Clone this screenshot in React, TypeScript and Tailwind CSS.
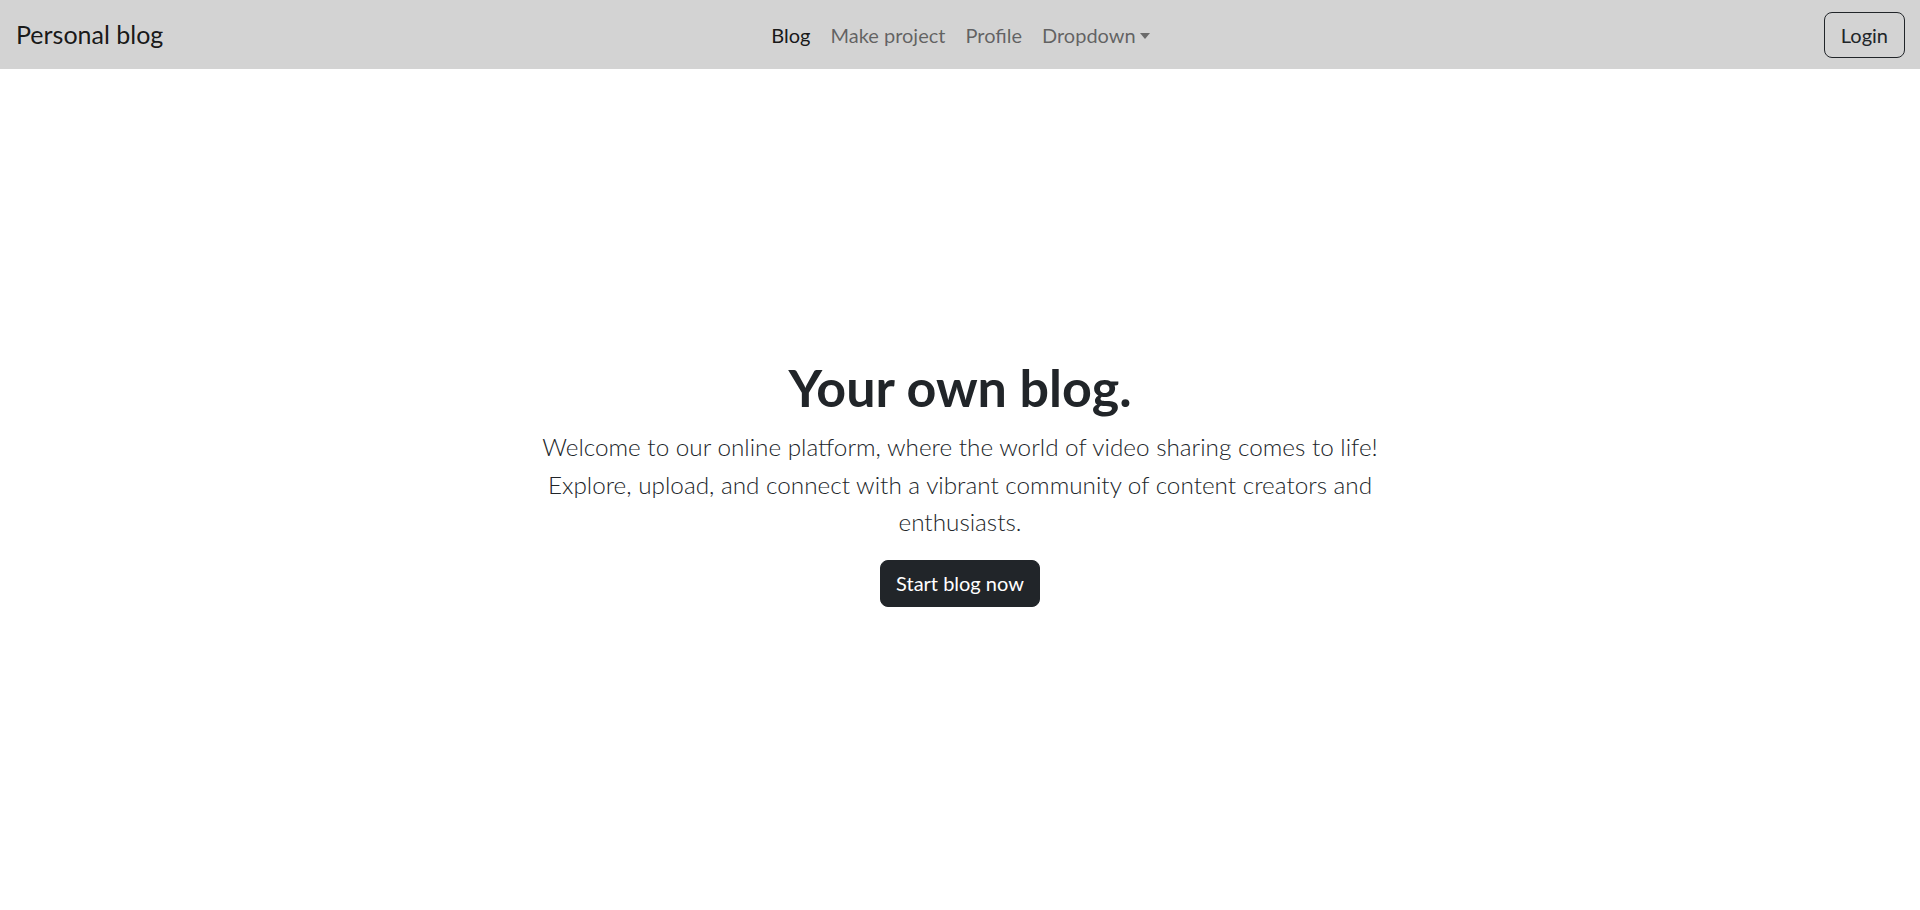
import React from "react";

const links = [
  { label: "Blog", active: true },
  { label: "Make project" },
  { label: "Profile" },
];

export default function App() {
  return (
    <div className="min-h-[910px] bg-white text-[#212529] font-['Lato','Noto_Sans',sans-serif]">
      <nav className="grid h-[69px] grid-cols-3 items-center bg-[#d3d3d3] pl-4 pr-[15px]">
        <a href="#" className="justify-self-start text-[25px] leading-[37px] text-black/90">
          Personal blog
        </a>
        <ul className="flex items-center justify-self-center text-[20px] leading-[30px]">
          {links.map((l) => (
            <li key={l.label}>
              <a
                href="#"
                className={"block px-[10px] " + (l.active ? "text-black/90" : "text-black/55")}
              >
                {l.label}
              </a>
            </li>
          ))}
          <li>
            <a href="#" className="flex items-center px-[10px] text-black/55">
              Dropdown
              <span className="ml-[4px] mt-[2px] h-0 w-0 border-x-[5px] border-t-[6px] border-x-transparent border-t-[#6b6b6b]" />
            </a>
          </li>
        </ul>
        <button className="justify-self-end rounded-[8px] border border-[#212529] px-[16px] py-[7px] text-[20px] leading-[30px] text-[#212529]">
          Login
        </button>
      </nav>

      <main className="flex flex-col items-center px-4 pt-[287px] text-center">
        <h1 className="mb-[10px] text-[52px] font-bold leading-[62px] text-[#212529]">Your own blog.</h1>
        <p className="mb-[19px] max-w-[870px] text-[24.3px] font-light leading-[37.5px] text-[#212529]">
          Welcome to our online platform, where the world of video sharing comes to life! Explore, upload, and
          connect with a vibrant community of content creators and enthusiasts.
        </p>
        <button className="rounded-[8px] border border-[#212529] bg-[#212529] px-[15px] py-[7.5px] text-[20px] leading-[30px] text-white">
          Start blog now
        </button>
      </main>
    </div>
  );
}
